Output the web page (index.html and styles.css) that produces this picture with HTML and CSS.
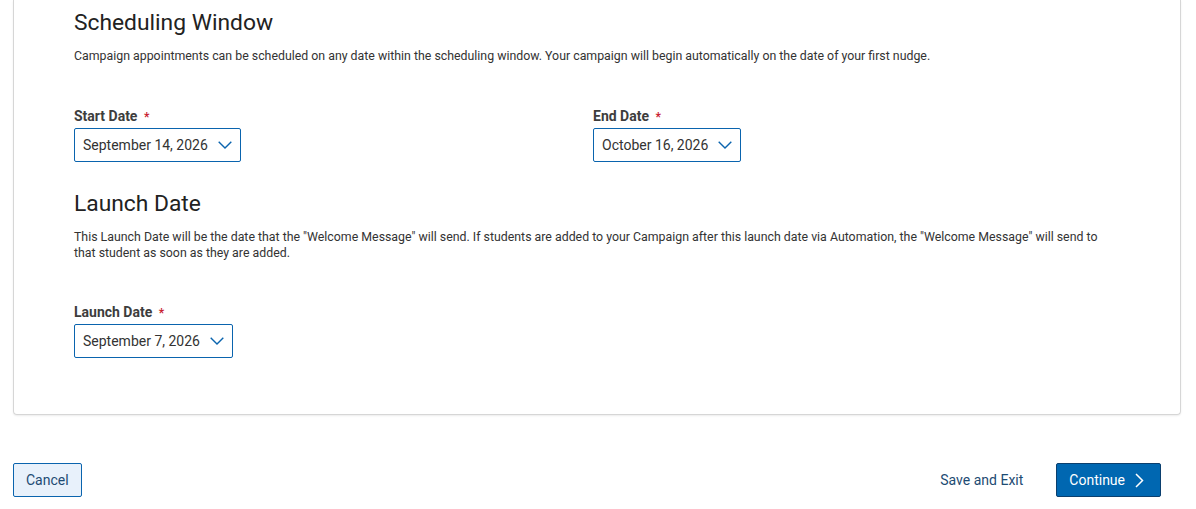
FILE: index.html
```html
<!DOCTYPE html>
<html lang="en">
<head>
    <meta charset="UTF-8">
    <meta name="viewport" content="width=device-width, initial-scale=1.0">
    <title>Campaign Dates</title>
    <link rel="stylesheet" href="styles.css">
</head>
<body>

    <div class="card">
        <!-- Scheduling window -->
        <section class="section">
            <h2>Scheduling Window</h2>
            <p class="desc">Campaign appointments can be scheduled on any date within the scheduling window. Your campaign will begin automatically on the date of your first nudge.</p>

            <div class="field-row">
                <div class="field">
                    <label>Start Date <span class="req">*</span></label>
                    <button class="date-select">September 14, 2026
                        <svg width="14" height="8" viewBox="0 0 14 8"><path d="M0.7 0.7 L7 7 L13.3 0.7" fill="none" stroke="#0a64ae" stroke-width="1.4"/></svg>
                    </button>
                </div>
                <div class="field">
                    <label>End Date <span class="req">*</span></label>
                    <button class="date-select">October 16, 2026
                        <svg width="14" height="8" viewBox="0 0 14 8"><path d="M0.7 0.7 L7 7 L13.3 0.7" fill="none" stroke="#0a64ae" stroke-width="1.4"/></svg>
                    </button>
                </div>
            </div>
        </section>

        <!-- Launch date -->
        <section class="section launch">
            <h2>Launch Date</h2>
            <p class="desc">This Launch Date will be the date that the "Welcome Message" will send. If students are added to your Campaign after this launch date via Automation, the "Welcome Message" will send to that student as soon as they are added.</p>

            <div class="field-row">
                <div class="field">
                    <label>Launch Date <span class="req">*</span></label>
                    <button class="date-select">September 7, 2026
                        <svg width="14" height="8" viewBox="0 0 14 8"><path d="M0.7 0.7 L7 7 L13.3 0.7" fill="none" stroke="#0a64ae" stroke-width="1.4"/></svg>
                    </button>
                </div>
            </div>
        </section>
    </div>

    <div class="footer">
        <button class="btn btn-cancel">Cancel</button>
        <div class="footer-right">
            <button class="btn btn-link">Save and Exit</button>
            <button class="btn btn-primary">Continue
                <svg width="9" height="15" viewBox="0 0 9 15"><path d="M1 1 L7.5 7.5 L1 14" fill="none" stroke="#fff" stroke-width="1.5"/></svg>
            </button>
        </div>
    </div>

</body>
</html>
```

FILE: styles.css
```css
body {
    font-family: 'Roboto', 'Liberation Sans', sans-serif;
    background-color: #fff;
    color: #333;
    margin: 0;
    padding: 0;
}

.card {
    margin: 0 15px 0 13px;
    padding: 7px 60px 56px 60px;
    border: 1px solid #d6d6d6;
    border-top: none;
    border-radius: 0 0 4px 4px;
    box-shadow: 0 1px 2px rgba(0, 0, 0, 0.08);
}

.section h2 {
    font-size: 22.8px;
    font-weight: 400;
    line-height: 32px;
    color: #222;
    margin: 0;
}

.section + .section {
    margin-top: 26px;
}

.desc {
    font-size: 12.35px;
    line-height: 16px;
    color: #333;
    margin: 9px 0 0;
    max-width: 1040px;
}

.field-row {
    display: grid;
    grid-template-columns: 519px 1fr;
    margin-top: 44px;
}

.launch .field-row {
    margin-top: 43px;
}

.field label {
    display: block;
    font-size: 14px;
    font-weight: 700;
    color: #3d3d3d;
    line-height: 16px;
    margin-bottom: 4px;
}

.req {
    color: #c8202f;
    font-size: 12px;
    line-height: 1;
    margin-left: 3px;
}

.date-select {
    display: inline-flex;
    align-items: center;
    gap: 10px;
    height: 34px;
    padding: 0 8px 0 8px;
    border: 1px solid #0a64ae;
    border-radius: 2px;
    background-color: #fff;
    font-family: inherit;
    font-size: 14px;
    color: #333;
    cursor: pointer;
}

.footer {
    display: flex;
    justify-content: space-between;
    align-items: center;
    margin: 48px 35px 0 13px;
}

.footer-right {
    display: flex;
    align-items: center;
    gap: 33px;
}

.btn {
    height: 34px;
    font-family: inherit;
    font-size: 14px;
    border-radius: 2px;
    cursor: pointer;
}

.btn-cancel {
    padding: 0 12px;
    background-color: #e8f1fb;
    border: 1px solid #0a64ae;
    color: #1d4b73;
}

.btn-link {
    padding: 0;
    background: none;
    border: none;
    color: #1d4b73;
}

.btn-primary {
    display: inline-flex;
    align-items: center;
    gap: 10px;
    padding: 0 16px 0 12px;
    background-color: #0067b1;
    border: 1px solid #0b3f6e;
    color: #fff;
}
```
